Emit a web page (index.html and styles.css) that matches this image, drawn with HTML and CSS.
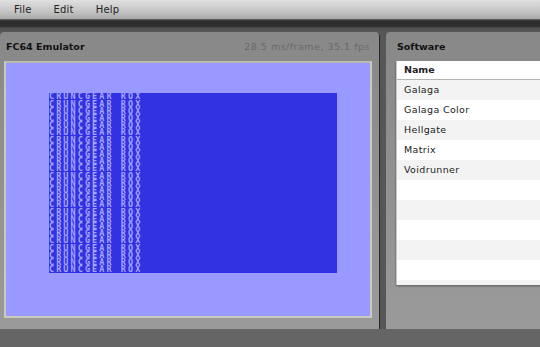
FILE: index.html
```html
<!DOCTYPE html>
<html lang="en">
<head>
    <meta charset="UTF-8">
    <title>FC64</title>
    <link rel="stylesheet" href="styles.css">
</head>
<body>
    <div class="menubar">
        <span class="menu-item">File</span>
        <span class="menu-item">Edit</span>
        <span class="menu-item">Help</span>
    </div>
    <div class="toolbar"></div>
    <div class="workspace">
        <div class="panel emulator">
            <div class="panel-header">
                <span class="panel-title">FC64 Emulator</span>
                <span class="stats">28.5 ms/frame, 35.1 fps</span>
            </div>
            <div class="screen">
                <div class="screen-inner" id="screenText"></div>
            </div>
        </div>
        <div class="panel software">
            <div class="panel-header">
                <span class="panel-title">Software</span>
            </div>
            <div class="table">
                <div class="table-head">Name</div>
                <div class="row">Galaga</div>
                <div class="row">Galaga Color</div>
                <div class="row">Hellgate</div>
                <div class="row">Matrix</div>
                <div class="row">Voidrunner</div>
                <div class="row"></div>
                <div class="row"></div>
                <div class="row"></div>
                <div class="row"></div>
                <div class="row"></div>
                <div class="row"></div>
            </div>
        </div>
    </div>

    <script>
        // fill the c64 screen (25 text rows) with the demo line
        const screenText = document.getElementById('screenText');
        for (let i = 0; i < 25; i++) {
            const line = document.createElement('div');
            line.className = 'c64-line';
            line.textContent = 'CRUNCGEAR ROX';
            screenText.appendChild(line);
        }
    </script>
</body>
</html>
```

FILE: styles.css
```css
body {
    margin: 0;
    font-family: "DejaVu Sans", Verdana, sans-serif;
    background-color: #656565;
    overflow: hidden;
}
.menubar {
    height: 19px;
    display: flex;
    align-items: center;
    padding-left: 14px;
    gap: 22px;
    background: linear-gradient(#e0e0e0, #c4c4c4 60%, #a9a9a9);
    font-size: 10px;
    letter-spacing: 0.2px;
    color: #222;
}
.toolbar {
    height: 13px;
    background: linear-gradient(#6a6a6a, #2c2c2c 15%, #2e2e2e 55%, #4f4f4f 70%, #575757);
}
.workspace {
    display: flex;
    gap: 7px;
    height: 297px;
    background-color: #575757;
}
.panel {
    background: linear-gradient(#888, #9a9a9a);
    border-radius: 4px 4px 0 0;
    box-shadow: 1px 1px 1px rgba(0,0,0,0.55);
}
.emulator {
    width: 379px;
    flex-shrink: 0;
}
.software {
    flex: 1;
    margin-right: -20px;
}
.panel-header {
    height: 29px;
    display: flex;
    justify-content: space-between;
    align-items: center;
    padding: 0 9px 0 6px;
}
.software .panel-header {
    padding-left: 11px;
}
.panel-title {
    font-size: 9.5px;
    font-weight: bold;
    color: #111;
}
.stats {
    font-size: 9.5px;
    letter-spacing: 0.5px;
    color: #6a6a6a;
}
.screen {
    margin-left: 4px;
    width: 364px;
    height: 253px;
    border: 2px solid #c9cbbd;
    border-top-color: #b9bbae;
    background-color: #9999ff;
    overflow: hidden;
}
/* 320x200 c64 text screen, drawn at 0.9 scale */
.screen-inner {
    margin: 30px 0 0 43px;
    width: 320px;
    height: 200px;
    background-color: #3232e2;
    overflow: hidden;
    transform: scale(0.9);
    transform-origin: 0 0;
}
.c64-line {
    height: 8px;
    line-height: 8px;
    font-family: "DejaVu Sans Mono", monospace;
    font-weight: bold;
    font-size: 9.4px;
    letter-spacing: 2.34px;
    color: #a6a6ff;
    white-space: pre;
}
.table {
    margin-left: 10px;
    height: 224px;
    background-color: #fff;
    border-left: 1px solid #c6c6c6;
    box-shadow: 0 1px 2px rgba(0,0,0,0.4);
    overflow: hidden;
    font-size: 9.5px;
    letter-spacing: 0.35px;
    color: #222;
}
.table-head {
    height: 18px;
    line-height: 18px;
    padding-left: 7px;
    font-weight: bold;
    letter-spacing: 0;
    border-bottom: 1px solid #b2b6b0;
}
.row {
    height: 20px;
    line-height: 20px;
    padding-left: 7px;
}
.row:nth-child(even) {
    background-color: #f3f3f3;
}
```
